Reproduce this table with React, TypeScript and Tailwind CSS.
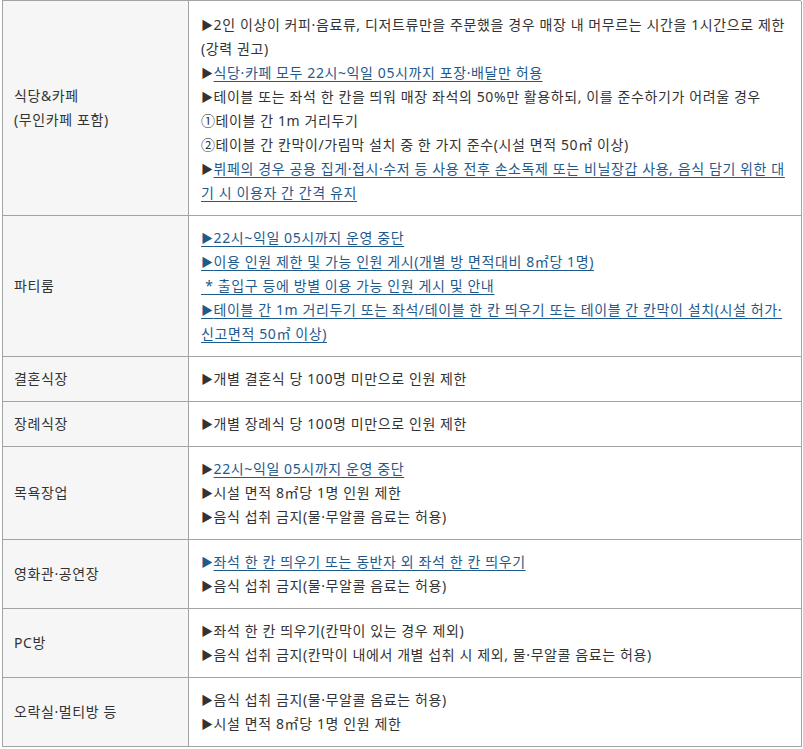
import React from 'react';

type Seg = { t: string; link?: boolean };
type Line = Seg[];

const rows: { label: string[]; lines: Line[] }[] = [
  {
    label: ['식당&카페', '(무인카페 포함)'],
    lines: [
      [{ t: '▶' }, { t: '2인 이상이 커피·음료류, 디저트류만을 주문했을 경우 매장 내 머무르는 시간을 1시간으로 제한 (강력 권고)' }],
      [{ t: '▶' }, { t: '식당·카페 모두 22시~익일 05시까지 포장·배달만 허용', link: true }],
      [{ t: '▶' }, { t: '테이블 또는 좌석 한 칸을 띄워 매장 좌석의 50%만 활용하되, 이를 준수하기가 어려울 경우' }],
      [{ t: '①테이블 간 1m 거리두기' }],
      [{ t: '②테이블 간 칸막이/가림막 설치 중 한 가지 준수(시설 면적 50㎡ 이상)' }],
      [{ t: '▶' }, { t: '뷔페의 경우 공용 집게·접시·수저 등 사용 전후 손소독제 또는 비닐장갑 사용, 음식 담기 위한 대기 시 이용자 간 간격 유지', link: true }],
    ],
  },
  {
    label: ['파티룸'],
    lines: [
      [{ t: '▶', link: true }, { t: '22시~익일 05시까지 운영 중단', link: true }],
      [{ t: '▶', link: true }, { t: '이용 인원 제한 및 가능 인원 게시(개별 방 면적대비 8㎡당 1명)', link: true }],
      [{ t: '\u00a0* 출입구 등에 방별 이용 가능 인원 게시 및 안내', link: true }],
      [{ t: '▶', link: true }, { t: '테이블 간 1m 거리두기 또는 좌석/테이블 한 칸 띄우기 또는 테이블 간 칸막이 설치(시설 허가·신고면적 50㎡ 이상)', link: true }],
    ],
  },
  { label: ['결혼식장'], lines: [[{ t: '▶' }, { t: '개별 결혼식 당 100명 미만으로 인원 제한' }]] },
  { label: ['장례식장'], lines: [[{ t: '▶' }, { t: '개별 장례식 당 100명 미만으로 인원 제한' }]] },
  {
    label: ['목욕장업'],
    lines: [
      [{ t: '▶' }, { t: '22시~익일 05시까지 운영 중단', link: true }],
      [{ t: '▶' }, { t: '시설 면적 8㎡당 1명 인원 제한' }],
      [{ t: '▶' }, { t: '음식 섭취 금지(물·무알콜 음료는 허용)' }],
    ],
  },
  {
    label: ['영화관·공연장'],
    lines: [
      [{ t: '▶', link: true }, { t: '좌석 한 칸 띄우기 또는 동반자 외 좌석 한 칸 띄우기', link: true }],
      [{ t: '▶' }, { t: '음식 섭취 금지(물·무알콜 음료는 허용)' }],
    ],
  },
  {
    label: ['PC방'],
    lines: [
      [{ t: '▶' }, { t: '좌석 한 칸 띄우기(칸막이 있는 경우 제외)' }],
      [{ t: '▶' }, { t: '음식 섭취 금지(칸막이 내에서 개별 섭취 시 제외, 물·무알콜 음료는 허용)' }],
    ],
  },
  {
    label: ['오락실·멀티방 등'],
    lines: [
      [{ t: '▶' }, { t: '음식 섭취 금지(물·무알콜 음료는 허용)' }],
      [{ t: '▶' }, { t: '시설 면적 8㎡당 1명 인원 제한' }],
    ],
  },
];

// arrow glyph is a bit big in our font, shrink it (small line-height so the row doesn't grow)
const arrowCls = 'text-[12px] leading-[12px]';

export default function App() {
  return (
    <div
      className="bg-white w-[803px] h-[749px] overflow-hidden text-[14px] leading-[24px] tracking-[0.6px] text-[#333]"
      style={{ fontFamily: '"Noto Sans", "Noto Sans CJK KR", sans-serif' }}
    >
      <div className="ml-[2px] w-[799px] grid grid-cols-[185px_614px] border-l border-t border-[#a3a3a3]">
        {rows.map((row, i) => (
          <React.Fragment key={i}>
            <div className="bg-[#f6f6f6] border-b border-[#a3a3a3] pl-[11px] pr-2 flex flex-col justify-center">
              {row.label.map((l, j) => (
                <div key={j}>{l}</div>
              ))}
            </div>
            <div className={`border-l border-r border-b border-[#a3a3a3] pl-[12px] pr-[10px] pb-[10px] ${i === 0 ? 'pt-[12px]' : 'pt-[10px]'}`}>
              {row.lines.map((line, j) => (
                <div key={j}>
                  {line.map((s, k) => {
                    const isArrow = s.t === '▶';
                    if (s.link) {
                      // arrows before a link are blue, underlined only in the 파티룸 rows
                      const under = !isArrow || i === 1;
                      return (
                        <a
                          key={k}
                          href="#"
                          className={`text-[#1f5a8c] ${under ? 'underline underline-offset-[3px] decoration-1' : ''} ${isArrow ? arrowCls : ''}`}
                        >
                          {s.t}
                        </a>
                      );
                    }
                    return (
                      <span key={k} className={isArrow ? arrowCls : ''}>
                        {s.t}
                      </span>
                    );
                  })}
                </div>
              ))}
            </div>
          </React.Fragment>
        ))}
      </div>
    </div>
  );
}
